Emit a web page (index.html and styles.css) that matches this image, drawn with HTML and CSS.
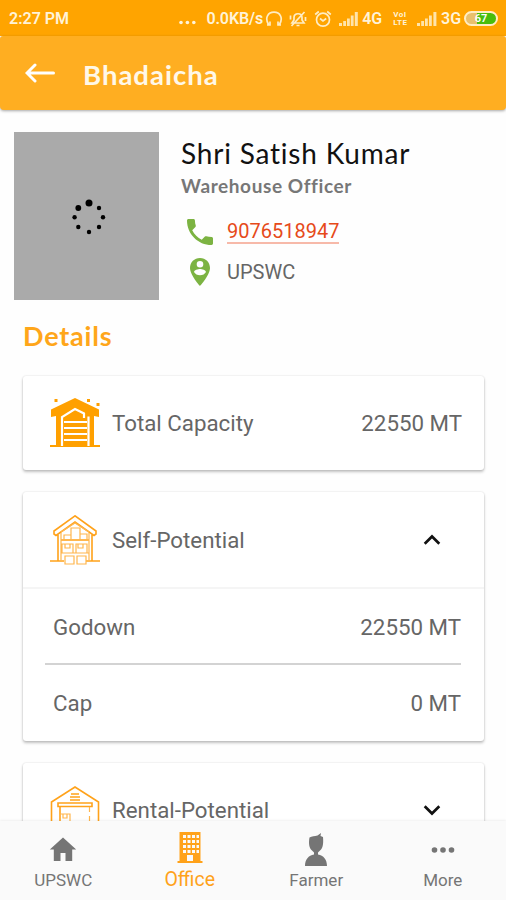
FILE: index.html
```html
<!DOCTYPE html>
<html lang="en">
<head>
  <meta charset="UTF-8" />
  <meta name="viewport" content="width=device-width, initial-scale=1.0"/>
  <title>Bhadaicha</title>
  <link rel="stylesheet" href="styles.css">
</head>
<body>
  <!-- Status bar -->
  <div class="status-bar">
    <span class="time">2:27 PM</span>
    <svg class="dots" width="17" height="5" viewBox="0 0 17 5"><circle cx="2" cy="2.5" r="1.8"/><circle cx="8.4" cy="2.5" r="1.8"/><circle cx="14.8" cy="2.5" r="1.8"/></svg>
    <span class="speed">0.0KB/s</span>
    <svg class="line-icon headphones" width="18" height="18" viewBox="0 0 18 18"><path d="M3.5 14.5C-.5 8 3 2.200 9 2.200S18.500 8 14.500 14.500M2 15h3v-3.500M16 15h-3v-3.500"/></svg>
    <svg class="line-icon bell" width="18" height="18" viewBox="0 0 18 18"><path d="M3 13h12l-2-3V7.500C13 2.500 5 2.500 5 7.500V10zM7.500 15.500h3M15.500 2L2.500 16M1.500 5.500v4M16.500 7v4"/></svg>
    <svg class="line-icon alarm" width="18" height="18" viewBox="0 0 18 18"><circle cx="9" cy="9.700" r="6.500"/><path d="M1.200 4.500l3.600-3M16.800 4.500l-3.600-3M6 8.500l3 2.500 3.200-2.500"/></svg>
    <svg class="signal" width="19" height="14" viewBox="0 0 19 14"><path d="M0 11h3v3H0zM4.200 9h2.800v5H4.200zM8 6.500h2.800V14H8zM11.800 3.500h2.800V14h-2.800zM15.800 0h3v14h-3z"/></svg>
    <span class="net">4G</span>
    <span class="volte"><span>VoI</span><span>LTE</span></span>
    <svg class="signal" width="20" height="14" viewBox="0 0 20 14"><path d="M0 11h3v3H0zM4.200 9h2.800v5H4.200zM8 6.500h2.800V14H8zM12 3.500h2.800V14H12zM16.400 0h3v14h-3z"/></svg>
    <span class="net">3G</span>
    <span class="battery">67</span>
  </div>

  <!-- App bar -->
  <header class="app-bar">
    <svg width="30" height="20" viewBox="0 0 30 20"><path d="M10 2L2 10l8 8M2.500 10H28.500"/></svg>
    <h1>Bhadaicha</h1>
  </header>

  <main>
    <!-- Officer -->
    <section class="profile">
      <div class="photo">
        <svg width="36" height="38" viewBox="0 0 36 38"><circle cx="18" cy="5" r="3.500"/><circle cx="28" cy="10" r="2.200"/><circle cx="32" cy="19.300" r="2.200"/><circle cx="28" cy="29" r="2.200"/><circle cx="18" cy="34" r="2.200"/><circle cx="7.300" cy="29" r="2.200"/><circle cx="3.600" cy="19.300" r="2.200"/><circle cx="7.300" cy="10" r="2.900"/></svg>
      </div>
      <div class="info">
        <h2>Shri Satish Kumar</h2>
        <p class="role">Warehouse Officer</p>
        <div class="contact">
          <svg width="26" height="26" viewBox="3 3 18 18"><path d="M6.620 10.790c1.440 2.830 3.760 5.140 6.590 6.590l2.200-2.200c.27-.27.67-.36 1.020-.24 1.120.37 2.330.57 3.570.57.550 0 1 .45 1 1V20c0 .55-.45 1-1 1-9.390 0-17-7.610-17-17 0-.55.450-1 1-1h3.500c.55 0 1 .45 1 1 0 1.250.2 2.450.57 3.570.11.35.030.740-.25 1.020l-2.200 2.200z"/></svg>
          <a href="tel:9076518947">9076518947</a>
        </div>
        <div class="contact place">
          <svg width="26" height="28" viewBox="0 0 26 28"><path fill-rule="evenodd" d="M13 0C7.300 0 3 4.300 3 10c0 7 10 18 10 18s10-11 10-18C23 4.300 18.700 0 13 0zM13 3a3.300 3.300 0 1 1 0 6.600A3.300 3.300 0 0 1 13 3zM13 17.300c-2.600 0-4.900-1.300-6-3.300 0-2 4-3.100 6-3.100s6 1.100 6 3.100c-1.100 2-3.400 3.300-6 3.300z"/></svg>
          <span>UPSWC</span>
        </div>
      </div>
    </section>

    <h3>Details</h3>

    <div class="card">
      <div class="card-head">
        <svg width="50" height="50" viewBox="0 0 50 50">
          <path class="fill" d="M25 0L1 11.500V19l5-1v29H0v2h50v-2h-6V18l5 1v-7.500z"/>
          <path class="gap" d="M12 48V19l13-8 9 4.500v4.500M38.500 48V18.500"/>
          <path class="gap" d="M14 24h23M14 30h23M14 36h23M14 42h23"/>
          <path class="fill" d="M4.500 1h3v3h-3zM37 1h3v3h-3zM46.500 5h3v3h-3z"/>
        </svg>
        <span>Total Capacity</span>
        <span class="value">22550 MT</span>
      </div>
    </div>

    <div class="card">
      <div class="card-head self">
        <svg width="50" height="50" viewBox="0 0 50 50">
          <path class="stroke" d="M25 .8L4 16v3l2 1.500L25 7l19 13.500 2-1.500v-3zM8 19v27M42 19v27M0 46h14M36 46h14M11 25h28"/>
          <path class="stroke light" d="M11 18v27M39 18v27M11 17l14-9 14 9M11 38h28M21 13h9v12h-9zM14 20h7v5h-7zM30 19h7v6h-7zM12 29h11v9H12zM26 29h11v9H26zM15 41h9v8h-9zM27 41h9v8h-9zM15 29v4h5v-4M28 29v4h5v-4"/>
        </svg>
        <span>Self-Potential</span>
        <svg class="chevron" width="18" height="12" viewBox="0 0 18 12"><path d="M1.700 9.700L9 2.500l7.300 7.200"/></svg>
      </div>
      <div class="rows">
        <div class="row"><span>Godown</span><span>22550 MT</span></div>
        <div class="row"><span>Cap</span><span>0 MT</span></div>
      </div>
    </div>

    <div class="card">
      <div class="card-head">
        <svg width="50" height="50" viewBox="0 0 50 50">
          <path class="stroke" d="M1.500 50V17L25 2l23.500 15v33M8 18h34v3.500H8zM10 22v28M21 9h8M20 12h10M20 15h10"/>
          <path class="stroke light" d="M10 29h10v9H10zM10 38h10v10H10zM13 29v4h4v-4M39.500 22v5M39.500 31v6"/>
        </svg>
        <span>Rental-Potential</span>
        <svg class="chevron" width="18" height="12" viewBox="0 0 18 12"><path d="M1.700 2.300L9 9.500l7.300-7.200"/></svg>
      </div>
    </div>
  </main>

  <!-- Bottom navigation -->
  <nav>
    <a class="tab">
      <svg width="28" height="34" viewBox="0 0 28 34"><path d="M14 4.500L.8 16.500h4V28h6.700v-8h5v8h6.700V16.500h4z"/></svg>
      <span>UPSWC</span>
    </a>
    <a class="tab active">
      <svg width="28" height="34" viewBox="0 0 28 34"><path fill-rule="evenodd" d="M3.500 0h21v29h2v2h-25v-2h2zM7 3v3h3V3zM11.500 3v3h3V3zM16 3v3h3V3zM20.500 3v3H23V3zM7 8v3h3V8zM11.500 8v3h3V8zM16 8v3h3V8zM20.500 8v3H23V8zM7 13v3h3v-3zM11.500 13v3h3v-3zM16 13v3h3v-3zM20.500 13v3H23v-3zM7 18v3h3v-3zM11.500 18v3h3v-3zM16 18v3h3v-3zM20.500 18v3H23v-3zM11 23v6h6v-6z"/></svg>
      <span>Office</span>
    </a>
    <a class="tab">
      <svg width="28" height="34" viewBox="0 0 28 34"><path d="M7.500 4.500c2.500-1.500 5-1 8-2L19 0l-.5 3L21 4c.5 6 .2 11-3 13.500l-2 2v2c5.500 1 9 5 9 11.500H3c0-6.500 3.500-10.500 9-11.500v-2l-2-2C7 15 6.500 10 7.500 4.500z"/></svg>
      <span>Farmer</span>
    </a>
    <a class="tab">
      <svg width="28" height="34" viewBox="0 0 28 34"><circle cx="5.500" cy="17" r="2.800"/><circle cx="14" cy="17" r="2.800"/><circle cx="22.500" cy="17" r="2.800"/></svg>
      <span>More</span>
    </a>
  </nav>
</body>
</html>
```
FILE: styles.css
```css
* {
  box-sizing: border-box;
}

body {
  margin: 0;
  height: 900px;
  display: flex;
  flex-direction: column;
  overflow: hidden;
  background: #fefefe;
  color: #666;
  font-family: Roboto, sans-serif;
}

h1, h2, h3, p {
  margin: 0;
}

svg {
  flex: none;
}

/* Status bar */
.status-bar {
  height: 36px;
  flex: none;
  display: flex;
  align-items: center;
  padding: 1px 8px 0 9px;
  background: #ffa400;
  color: #fff3d8;
  fill: #fff3d8;
  font-size: 16px;
  font-weight: 600;
  white-space: nowrap;
}

.time {
  width: 171px;
}

.dots {
  margin-top: 8px;
}

.speed {
  width: 57px;
  margin-left: 10px;
  letter-spacing: -0.1px;
}

.line-icon {
  fill: none;
  stroke: #ffedc4;
  stroke-width: 1.7;
}

.headphones {
  margin-left: 2px;
}

.bell {
  margin-left: 6px;
}

.alarm {
  margin-left: 7px;
}

.signal {
  margin-left: 7px;
  fill: #ffe4aa;
}

.net {
  width: 20px;
  margin-left: 4px;
}

.volte {
  width: 17px;
  margin-left: 11px;
  display: flex;
  flex-direction: column;
  font-size: 8px;
  line-height: 8px;
  font-weight: 700;
  letter-spacing: 0.5px;
}

.battery {
  width: 34px;
  height: 15px;
  margin-left: 3px;
  border: 2px solid #ffedc4;
  border-radius: 8px;
  background: linear-gradient(90deg, #e9c06d 11px, #49bd0b 11px);
  color: #fff;
  font-size: 11px;
  line-height: 11px;
  text-align: center;
}

/* App bar */
.app-bar {
  height: 74px;
  flex: none;
  display: flex;
  align-items: center;
  padding: 3px 25px 0;
  border-radius: 3px 3px 4px 4px;
  background: #ffae21;
  box-shadow: 0 1px 3px rgba(0,0,0,0.35);
}

.app-bar path {
  fill: none;
  stroke: #fff;
  stroke-width: 3;
  stroke-linecap: round;
}

.app-bar svg {
  margin-top: -3px;
}

h1, h2, h3, .role {
  font-family: Lato, sans-serif;
  font-variant-ligatures: none;
}

h1 {
  margin-left: 28px;
  color: #fff8e8;
  font-size: 27.5px;
  font-weight: 700;
  letter-spacing: 1px;
}

main {
  flex: 1;
  min-height: 0;
  overflow: hidden;
  padding: 22px 22px 0 23px;
}

/* Officer */
.profile {
  display: flex;
  margin-left: -9px;
}

.photo {
  width: 145px;
  height: 168px;
  display: flex;
  align-items: center;
  justify-content: center;
  background: #aaa;
}

.photo svg {
  margin: 2px 0 0 4px;
}

.info {
  margin-left: 22px;
}

h2 {
  margin-top: 3px;
  color: #111;
  font-size: 28px;
  font-weight: 400;
  line-height: 37px;
  letter-spacing: 0.8px;
  white-space: nowrap;
}

.role {
  font-size: 19px;
  font-weight: 700;
  line-height: 28px;
  letter-spacing: 0.6px;
  color: #777;
}

.contact {
  display: flex;
  align-items: center;
  height: 40px;
  margin-top: 12px;
  padding-left: 6px;
  font-size: 20px;
}

.contact svg {
  margin-right: 14px;
  fill: #7cb342;
}

.contact a {
  border-bottom: 2px solid #f7b9a9;
  color: #e64a19;
  line-height: 22px;
  text-decoration: none;
}

.place {
  margin-top: 0;
}

h3 {
  margin: 17px 0 22px;
  color: #ffa61a;
  font-size: 27px;
  font-weight: 700;
  line-height: 37px;
  letter-spacing: 0.8px;
}

/* Cards */
.card {
  margin-bottom: 22px;
  border-radius: 3px;
  background: #fff;
  box-shadow: 0 2px 3px rgba(0,0,0,0.24), 0 0 2px rgba(0,0,0,0.14);
}

.card-head {
  height: 94px;
  display: flex;
  align-items: center;
  padding: 0 22px 0 27px;
  font-size: 22.3px;
}

.card-head span {
  margin-left: 12px;
}

.card-head .value {
  margin-left: auto;
}

.stroke {
  fill: none;
  stroke: #ffa21a;
  stroke-width: 1.6;
}

.light {
  stroke: #ffb64d;
  stroke-width: 1.2;
}

.fill {
  fill: #ffa000;
}

.gap {
  fill: none;
  stroke: #fff;
  stroke-width: 2.2;
}

.chevron {
  margin-left: auto;
  margin-right: 21px;
  fill: none;
  stroke: #111;
  stroke-width: 2.7;
}

.self {
  height: 97px;
  padding-top: 1px;
  border-bottom: 2px solid #f5f5f5;
}

.rows {
  padding: 0 23px 0 22px;
}

.row {
  height: 76px;
  display: flex;
  align-items: center;
  justify-content: space-between;
  padding-left: 8px;
  font-size: 22.3px;
}

.row:first-child {
  padding-top: 2px;
  border-bottom: 2px solid #d3d3d3;
}

/* Bottom navigation */
nav {
  height: 79px;
  flex: none;
  display: flex;
  background: #fafafa;
  box-shadow: 0 -1px 2px rgba(0,0,0,0.06);
  position: relative;
}

.tab {
  flex: 1;
  display: flex;
  flex-direction: column;
  align-items: center;
  padding-top: 12px;
  color: #757575;
  fill: #757575;
  font-size: 17px;
}

.tab span {
  margin-top: 3px;
  line-height: 20px;
}

.active {
  padding-top: 11px;
  color: #ffa21a;
  fill: #ffa21a;
  font-size: 19.5px;
}

.active span {
  margin-top: 4px;
}
```
